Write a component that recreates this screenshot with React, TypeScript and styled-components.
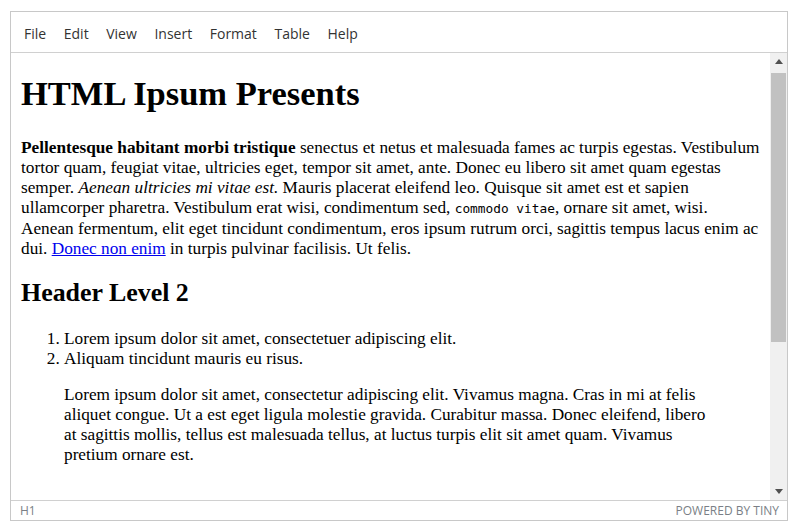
import React from "react";
import styled, { createGlobalStyle } from "styled-components";

const Global = createGlobalStyle`
  html, body { margin: 0; padding: 0; background: #fff; }
  * { box-sizing: border-box; }
`;

const Page = styled.div`
  padding: 11px 12px 0 10px;
`;

const Editor = styled.div`
  width: 778px;
  height: 510px;
  border: 1px solid #c8c8c8;
  display: flex;
  flex-direction: column;
  background: #fff;
`;

const MenuBar = styled.div`
  height: 41px;
  border-bottom: 1px solid #d0d0d0;
  display: flex;
  align-items: center;
  padding: 3px 0 0 5px;
  font-family: "Open Sans", "Noto Sans", sans-serif;
  font-size: 14px;
  color: #333;
`;

const MenuItem = styled.span`
  padding: 0 8px;
  margin-right: 1.6px;
  line-height: 20px;
`;

const Middle = styled.div`
  flex: 1;
  display: flex;
  min-height: 0;
`;

const Body = styled.div`
  flex: 1;
  overflow: hidden;
  padding: 0 9px 0 10px;
  font-family: "Liberation Serif", "Times New Roman", serif;
  font-size: 17.25px;
  line-height: 20px;
  color: #000;
`;

const H1 = styled.h1`
  font-size: 34.5px;
  line-height: normal;
  font-weight: bold;
  margin: 21px 0 25px;
`;

const H2 = styled.h2`
  font-size: 25.9px;
  line-height: normal;
  font-weight: bold;
  margin: 19px 0 21px;
`;

const P = styled.p`
  margin: 0;
`;

const Code = styled.code`
  font-family: "DejaVu Sans Mono", "Liberation Mono", monospace;
  font-size: 12.8px;
`;

const Link = styled.a`
  color: #0000ee;
  text-decoration: underline;
`;

const List = styled.ol`
  margin: 0;
  padding-left: 43px;
`;

const Quote = styled.blockquote`
  margin: 16px 47px 0 43px;
`;

const Scrollbar = styled.div`
  width: 17px;
  display: flex;
  flex-direction: column;
  background: #f0f0f0;
`;

const Arrow = styled.div`
  height: 17px;
  display: flex;
  align-items: center;
  justify-content: center;
`;

const Track = styled.div`
  flex: 1;
  padding: 3px 1px 0 1px;
`;

const Thumb = styled.div`
  height: 269px;
  background: #c1c1c1;
`;

const StatusBar = styled.div`
  height: 20px;
  border-top: 1px solid #d0d0d0;
  display: flex;
  align-items: center;
  justify-content: space-between;
  padding: 0 8px 0 9px;
  font-family: "Open Sans", "Noto Sans", sans-serif;
  font-size: 12px;
  color: #7a7f86;
`;

const Tri = ({ up }: { up?: boolean }) => (
  <svg width="8" height="5" viewBox="0 0 8 5">
    <path d={up ? "M0 5 L4 0 L8 5 Z" : "M0 0 L8 0 L4 5 Z"} fill="#505050" />
  </svg>
);

const menus = ["File", "Edit", "View", "Insert", "Format", "Table", "Help"];

export default function App() {
  return (
    <>
      <Global />
      <Page>
        <Editor>
          <MenuBar>
            {menus.map((m) => (
              <MenuItem key={m}>{m}</MenuItem>
            ))}
          </MenuBar>
          <Middle>
            <Body>
              <H1>HTML Ipsum Presents</H1>
              <P>
                <strong>Pellentesque habitant morbi tristique</strong> senectus et netus et malesuada
                fames ac turpis egestas. Vestibulum tortor quam, feugiat vitae, ultricies eget, tempor
                sit amet, ante. Donec eu libero sit amet quam egestas semper.{" "}
                <em>Aenean ultricies mi vitae est.</em> Mauris placerat eleifend leo. Quisque sit amet
                est et sapien ullamcorper pharetra. Vestibulum erat wisi, condimentum sed,{" "}
                <Code>commodo vitae</Code>, ornare sit amet, wisi. Aenean fermentum, elit eget tincidunt
                condimentum, eros ipsum rutrum orci, sagittis tempus lacus enim ac dui.{" "}
                <Link href="#">Donec non enim</Link> in turpis pulvinar facilisis. Ut felis.
              </P>
              <H2>Header Level 2</H2>
              <List>
                <li>Lorem ipsum dolor sit amet, consectetuer adipiscing elit.</li>
                <li>Aliquam tincidunt mauris eu risus.</li>
              </List>
              <Quote>
                <P>
                  Lorem ipsum dolor sit amet, consectetur adipiscing elit. Vivamus magna. Cras in mi at
                  felis aliquet congue. Ut a est eget ligula molestie gravida. Curabitur massa. Donec
                  eleifend, libero at sagittis mollis, tellus est malesuada tellus, at luctus turpis elit
                  sit amet quam. Vivamus pretium ornare est.
                </P>
              </Quote>
            </Body>
            <Scrollbar>
              <Arrow>
                <Tri up />
              </Arrow>
              <Track>
                <Thumb />
              </Track>
              <Arrow>
                <Tri />
              </Arrow>
            </Scrollbar>
          </Middle>
          <StatusBar>
            <span>H1</span>
            <span>POWERED BY TINY</span>
          </StatusBar>
        </Editor>
      </Page>
    </>
  );
}
